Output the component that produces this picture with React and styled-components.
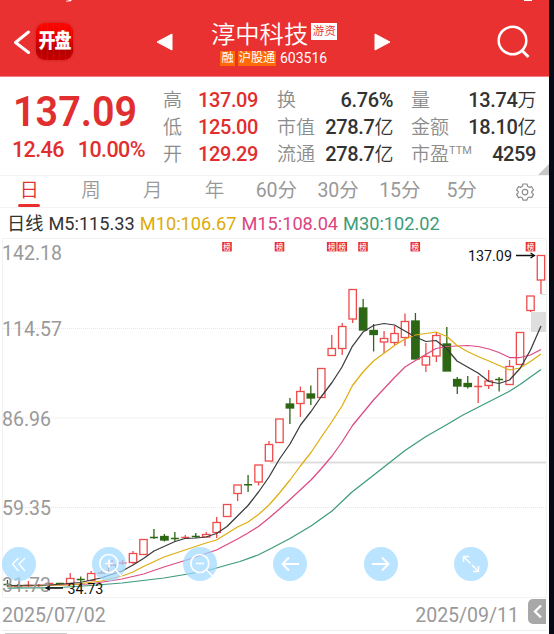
import React from 'react';
import styled, { createGlobalStyle } from 'styled-components';

const GlobalStyle = createGlobalStyle`
  * {
    box-sizing: border-box;
  }
  body {
    margin: 0;
    background: #060b13;
    font-family: Roboto, "Noto Sans CJK SC", sans-serif;
    overflow: hidden;
  }
`;

const RED = '#e93030';
const UP = '#ee4b4b';
const DOWN = '#2d6614';

const Screen = styled.main`
  width: 549px;
  height: 634px;
  background: #fff;
  overflow: hidden;
`;

const Header = styled.header`
  display: flex;
  position: relative;
  height: 77px;
  padding: 22px 19px 0 13px;
  background: #e93131;
  border-bottom: 1px solid #f38182;
  color: #fff;
`;

const StatusMarks = styled.svg`
  position: absolute;
  top: 0;
  left: 0;
`;

const BackIcon = styled.svg`
  flex: none;
  margin-top: 7px;
`;

const Logo = styled.div`
  flex: none;
  width: 37px;
  height: 37px;
  margin: 1px 0 0 6px;
  border-radius: 9px;
  background:
    repeating-linear-gradient(90deg, transparent 0 5px, rgba(255, 90, 70, 0.12) 5px 6px),
    linear-gradient(#ff0500, #e00000 45%, #b50000 75%, #c80000);
  box-shadow: 0 0 3px rgba(120, 0, 0, 0.35);
  font-size: 17px;
  font-weight: 900;
  line-height: 37px;
  letter-spacing: -1px;
  text-align: center;
  white-space: nowrap;

  span {
    display: block;
    transform: scaleY(1.2);
  }
`;

const PrevIcon = styled.svg`
  flex: none;
  margin: 10px 0 0 83px;
`;

const NextIcon = styled.svg`
  flex: none;
  margin: 10px 0 0 36px;
`;

const SearchIcon = styled.svg`
  flex: none;
  margin: 3px 0 0 auto;
`;

const Title = styled.div`
  flex: none;
  width: 127px;
  margin-left: 38px;
`;

const NameRow = styled.div`
  display: flex;
  height: 27px;
  align-items: flex-start;
`;

const Name = styled.h1`
  margin: 0;
  font-size: 24.3px;
  font-weight: 350;
  line-height: 26px;
  white-space: nowrap;
`;

const Flag = styled.span`
  flex: none;
  width: 26px;
  height: 17px;
  margin: 1px 0 0 3px;
  background: #fff;
  color: ${RED};
  font-size: 11.5px;
  font-weight: 350;
  line-height: 17px;
  text-align: center;
`;

const CodeRow = styled.div`
  display: flex;
  align-items: center;
  height: 18px;
  padding-left: 9px;
  font-size: 14px;
  line-height: 18px;
`;

const Tag = styled.span`
  height: 15px;
  width: ${(p) => p.$width}px;
  margin-right: ${(p) => p.$gap}px;
  background: #ff6a06;
  font-size: 12.2px;
  line-height: 15px;
  text-align: center;
  white-space: nowrap;
`;

const Quote = styled.section`
  display: flex;
  position: relative;
  height: 99px;
  padding-top: 10px;
  border-bottom: 1px solid #f3f3f3;
`;

const PriceBlock = styled.div`
  width: 163px;
  padding-left: 13px;
  color: #e12e2f;
  font-weight: 600;
`;

const Price = styled.div`
  padding-top: 1px;
  font-size: 42.5px;
  line-height: 48px;

  span {
    display: inline-block;
    transform: scaleX(0.93);
    transform-origin: 0 50%;
  }
`;

const Change = styled.div`
  display: flex;
  gap: 14px;
  margin-left: -1px;
  font-size: 21.5px;
  font-weight: 500;
  line-height: 27px;
  letter-spacing: -0.6px;
`;

const Stats = styled.dl`
  width: ${(p) => p.$width}px;
  margin: 0 ${(p) => p.$gap}px 0 0;
`;

const Stat = styled.div`
  display: flex;
  justify-content: space-between;
  height: 27px;
  font-size: 19px;
  line-height: 27px;
  white-space: nowrap;
`;

const Label = styled.dt`
  color: #8c8c8c;
  font-weight: 350;

  sup {
    position: relative;
    top: -7px;
    font-size: 11px;
    font-weight: 400;
    line-height: 0;
    vertical-align: baseline;
  }
`;

const Value = styled.dd`
  margin: 0;
  color: ${(p) => (p.$up ? '#e12e2f' : '#333')};
  font-size: 20px;
  font-weight: 500;
  letter-spacing: -0.4px;

  span {
    font-size: 19px;
    font-weight: 350;
  }
`;

const Corner = styled.svg`
  position: absolute;
  right: 0;
  bottom: 0;
`;

const Tabs = styled.nav`
  display: flex;
  height: 32px;
  margin-left: -1.5px;
  border-bottom: 1px solid #f3f3f3;
`;

const Tab = styled.div`
  display: flex;
  flex-direction: column;
  align-items: center;
  width: 61.75px;
  color: ${(p) => (p.$active ? RED : '#999')};
  font-size: 19.5px;
  font-weight: ${(p) => (p.$digits ? 400 : 350)};
  line-height: 30px;

  &::after {
    content: '';
    flex: none;
    width: 22px;
    height: 3px;
    margin-top: -2px;
    border-radius: 2px;
    background: ${(p) => (p.$active ? RED : 'transparent')};
  }
`;

const Gear = styled.svg`
  margin: 7px 0 0 23px;
`;

const Legend = styled.div`
  display: flex;
  gap: 5px;
  height: 30px;
  padding-left: 7px;
  font-size: 18.2px;
  line-height: 32px;
  white-space: nowrap;
`;

const Average = styled.span`
  color: ${(p) => p.$color};
`;

const ChartArea = styled.section`
  position: relative;
  height: 360px;

  > svg {
    display: block;
  }
`;

const Controls = styled.div`
  position: absolute;
  left: 2px;
  top: 309px;
  display: flex;
  gap: 56.4px;
`;

const RoundButton = styled.button`
  display: block;
  width: 34px;
  height: 34px;
  padding: 0;
  border: 0;
  border-radius: 50%;
  background: rgba(160, 218, 255, 0.72);

  svg {
    display: block;
  }
`;

const DateBar = styled.div`
  display: flex;
  justify-content: space-between;
  height: 33px;
  margin: 0 3px 0 2px;
  border-bottom: 1px solid #eee;
  color: #999;
  font-size: 19.5px;
  line-height: 36px;
`;

const EndDate = styled.div`
  display: flex;
  gap: 9px;
`;

const Handle = styled.div`
  width: 18px;
  height: 25px;
  margin-top: 1px;
  border-radius: 5px 0 0 5px;
  background: #a8a8a8;

  svg {
    display: block;
  }
`;

const BottomBar = styled.div`
  width: 62px;
  height: 2px;
  margin: 2px 0 0 5px;
  background: #c8c8c8;
`;

const stats = [
  {
    width: 95,
    gap: 19,
    rows: [
      { label: '高', value: '137.09', up: true },
      { label: '低', value: '125.00', up: true },
      { label: '开', value: '129.29', up: true },
    ],
  },
  {
    width: 116,
    gap: 18,
    rows: [
      { label: '换', value: '6.76%' },
      { label: '市值', value: '278.7', unit: '亿' },
      { label: '流通', value: '278.7', unit: '亿' },
    ],
  },
  {
    width: 125,
    gap: 0,
    rows: [
      { label: '量', value: '13.74', unit: '万' },
      { label: '金额', value: '18.10', unit: '亿' },
      { label: '市盈', sup: 'TTM', value: '4259' },
    ],
  },
];

const tabs = ['日', '周', '月', '年', '60分', '30分', '15分', '5分'];

const averages = [
  { text: 'M5:115.33', color: '#333' },
  { text: 'M10:106.67', color: '#dcab08' },
  { text: 'M15:108.04', color: '#dc4480' },
  { text: 'M30:102.02', color: '#3c9b79' },
];

// [up, body top, body bottom, wick top, wick bottom]
const candles = [
  [0, 584, 585, 580, 587], [0, 586, 587, 584, 588], [1, 585, 586, 581, 587], [1, 585, 586, 584, 587],
  [1, 583, 584, 583, 585], [0, 583, 584, 583, 584], [1, 578.5, 583.5, 573, 583], [0, 579, 580, 576.5, 582],
  [1, 573.5, 580.5, 571, 580], [1, 572.5, 573.5, 570, 574], [1, 565, 571.5, 560, 571], [1, 562.5, 563.5, 560, 565],
  [1, 553.5, 562.5, 551, 564], [1, 539.5, 554.5, 539, 554], [0, 537, 538, 529, 539], [0, 536.5, 540, 534, 541.5],
  [0, 538, 539, 532, 541], [1, 537, 538, 535, 539], [0, 536, 537, 533, 538], [1, 534.5, 537, 532, 537],
  [1, 522.5, 532.5, 517, 538], [1, 504.5, 516.5, 504, 516], [1, 485, 493.5, 485, 501], [0, 484, 485.5, 475, 492],
  [1, 465, 482, 465, 485.5], [1, 444.5, 461, 441, 461], [1, 419, 442.5, 419, 442], [0, 404, 408, 398, 424],
  [1, 391.5, 403.5, 386.5, 417], [0, 394, 398, 385.5, 405], [1, 368.5, 397.5, 368, 397], [1, 348.5, 355.5, 335, 355],
  [1, 326.5, 348.5, 323, 355], [1, 289.5, 319, 289, 323], [0, 308, 330, 299, 330], [0, 330.5, 334.5, 324, 351.5],
  [1, 338.5, 342, 331, 353], [1, 333.5, 342.5, 326, 345], [1, 321.5, 337.5, 313.5, 346], [0, 321, 359, 313, 359],
  [1, 356.5, 365, 343, 372], [1, 335.5, 356, 332, 362], [0, 344, 371, 327, 371], [0, 379.5, 386, 377, 394],
  [0, 383.5, 386.5, 376, 388.5], [1, 386, 387, 376, 403], [1, 381, 385.5, 370, 389], [0, 379, 380, 377, 391.5],
  [1, 366.5, 384.5, 360, 385], [1, 332.5, 364.5, 332, 365], [1, 296, 310.5, 296, 312], [1, 255.5, 280, 255, 294],
];

const lines = [
  {
    color: '#3d9b7a',
    points: '7.5,588 60,587.5 91,585.5 122,583 164,578 206,571 227,565 240,561.5 258,555 269,549.5 290,538.5 311,526 332,511 352,492 370,478 384,467 405,450.5 426,436.5 447,424.5 463,415 487,402.7 509,391.5 520,384.5 541,369.5',
  },
  {
    color: '#dc4a85',
    points: '7.5,586.5 90,584 122,579 143.5,574 164,567 185,560.5 206,553.5 216.5,550 227,544.5 237.5,539 248,533 258.5,526.5 269,518 279.5,509 290,499.5 311,480 321,469 332,456 342,442 352.5,425.5 373.5,400 394.5,377.5 405,367 415.5,360.5 436,348.5 447,346.5 467.5,345.5 478,346.5 489,349 499,352.5 509.5,357.5 520,357.5 530.5,355 541,349.5',
  },
  {
    color: '#dfad10',
    points: '7.5,586 70,585 101.5,581 122,576 133,572 143.5,566.5 164,557 185,550 206,543 216.5,540 227,533.5 237.5,527 248,522 258.5,514.5 269,505 279.5,493 290,480 300,466.5 311,452.5 321,437.5 332,421.5 342,406 352.5,385.5 363,372 373.5,361 394.5,345.5 405,339 415.5,335 426,333.5 436,332 447,336.5 457,345.5 467.5,351.5 478,356.5 489,361 509.5,370 520,368 530.5,361.5 541,354',
  },
  {
    color: '#3b3b3b',
    points: '7.5,585.5 50,585 80,582.5 101,578 122,571 133,565 143.5,558.5 154,551 164,546.5 175,541.5 185,538.5 196,538 206,537 216.5,533.5 227,526.5 237.5,516 248,505.5 258.5,492 269,477 279.5,459 290,444 300.5,425 311,411.5 321,397 332,382.5 342,367 352.5,346 363,332 373.5,325.5 384,323.5 394.5,325 405,331 415.5,337 426,341.5 436,340.5 447,349 457,361 467.5,367 478,373 489,381.5 499,383.5 509.5,380 520,368.5 530.5,350 541,326',
  },
];

const badges = [227, 279.5, 331.7, 342.2, 363, 415.3, 530.5];

const Candle = ({ index, data }) => {
  const [up, top, bottom, high, low] = data;
  const x = 7.5 + index * 10.46;
  const color = up ? UP : DOWN;
  if (bottom - top <= 1.5) {
    return (
      <g stroke={color} strokeWidth="1.3">
        <path d={`M${x} ${high}V${low}M${x - 4} ${(top + bottom) / 2}h8`} />
      </g>
    );
  }
  return (
    <g stroke={color} strokeWidth="1.3">
      <path d={`M${x} ${high}V${low}`} />
      <rect x={x - 3.7} y={top} width="7.4" height={bottom - top} fill={up ? '#fff' : color} />
    </g>
  );
};

const Chart = () => (
  <svg width="549" height="360" viewBox="0 238 549 360" fill="none">
    <path d="M2.5 238.5H546.5V597.5H2.5Z" stroke="#f2f2f2" />
    <path d="M3 328.5H546M3 418H546M3 507.5H546" stroke="#e6e6e6" strokeDasharray="1 1" />
    <path d="M270 462.5H546" stroke="#dedede" strokeWidth="2" />
    <path d="M541 294.5H546" stroke="#ddd" />
    <rect x="531" y="312" width="15" height="20" fill="#dedede" />
    {candles.map((data, i) => (
      <Candle key={i} index={i} data={data} />
    ))}
    {lines.map((line) => (
      <polyline key={line.color} points={line.points} stroke={line.color} strokeWidth="1.25" strokeLinejoin="round" />
    ))}
    {badges.map((x) => (
      <g key={x}>
        <rect x={x - 4.8} y="242" width="9.6" height="9.4" fill={RED} />
        <text x={x} y="249.5" fill="#fff" fontSize="7.5" fontWeight="500" textAnchor="middle">榜</text>
      </g>
    ))}
    <g fill="#999" fontSize="19.5">
      <text x="2" y="259.5">142.18</text>
      <text x="2" y="335.5">114.57</text>
      <text x="2" y="425.5">86.96</text>
      <text x="2" y="515">59.35</text>
      <text x="2" y="591.5">31.73</text>
    </g>
    <g fill="#111" fontSize="14.3">
      <text x="468" y="260.5">137.09</text>
      <text x="67.5" y="593.5">34.73</text>
    </g>
    <path d="M516 255.5H534M530.5 253L534.5 255.5L530.5 258M46 588H63M50 586L46 588L50 590" stroke="#111" strokeWidth="1.3" />
  </svg>
);

const icons = [
  <path key="first" d="M16.5 11L10.5 17L16.5 24M23 11L17 17L23 24" strokeWidth="1.4" />,
  <g key="in" strokeWidth="1.7">
    <circle cx="16.8" cy="16.5" r="9" />
    <path d="M13 16.5H21M17 12.5V20.5M23.5 23L30 29.5" />
  </g>,
  <g key="out" strokeWidth="1.7">
    <circle cx="16.8" cy="16.5" r="9" />
    <path d="M13 16.5H21M23.5 23L30 29.5" />
  </g>,
  <path key="left" d="M26 17H9.5M16 10.5L9.5 17L16 23.5" strokeWidth="2" />,
  <path key="right" d="M8 17H24.5M18 10.5L24.5 17L18 23.5" strokeWidth="2" />,
  <path key="expand" d="M9.500 15V9.500H15M9.500 9.500L16.500 16.500M18 18L24.500 24.500M24.500 19V24.500H19" strokeWidth="1.5" />,
];

const App = () => (
  <>
    <GlobalStyle />
    <Screen>
      <Header>
        <StatusMarks width="549" height="3" fill="#fff">
          <path d="M69 0H72Q71 2 66 1.5V.7Q68.500 1 69 0ZM524 0H532V1H524Z" />
        </StatusMarks>
        <BackIcon width="17" height="27" viewBox="0 0 17 27" fill="none">
          <path d="M15.500 3L2.500 13.500L15.500 23.500" stroke="#fff" strokeWidth="3" strokeLinecap="round" strokeLinejoin="round" />
        </BackIcon>
        <Logo>
          <span>开盘</span>
        </Logo>
        <PrevIcon width="17" height="20" viewBox="0 0 17 20">
          <path d="M1 10L16 2V18Z" fill="#fff" stroke="#fff" strokeLinejoin="round" />
        </PrevIcon>
        <Title>
          <NameRow>
            <Name>淳中科技</Name>
            <Flag>游资</Flag>
          </NameRow>
          <CodeRow>
            <Tag $width={15} $gap={3}>融</Tag>
            <Tag $width={38} $gap={4}>沪股通</Tag>
            603516
          </CodeRow>
        </Title>
        <NextIcon width="17" height="20" viewBox="0 0 17 20">
          <path d="M16 10L1 2V18Z" fill="#fff" stroke="#fff" strokeLinejoin="round" />
        </NextIcon>
        <SearchIcon width="34" height="34" viewBox="0 0 34 34" fill="none" stroke="#fff" strokeWidth="2.5">
          <circle cx="16.500" cy="15.500" r="13.800" />
          <path d="M26 25.500L32.500 32" strokeWidth="3" />
        </SearchIcon>
      </Header>
      <Quote>
        <PriceBlock>
          <Price>
            <span>137.09</span>
          </Price>
          <Change>
            <span>12.46</span>
            <span>10.00%</span>
          </Change>
        </PriceBlock>
        {stats.map((column) => (
          <Stats key={column.width} $width={column.width} $gap={column.gap}>
            {column.rows.map((row) => (
              <Stat key={row.label}>
                <Label>
                  {row.label}
                  {row.sup && <sup>{row.sup}</sup>}
                </Label>
                <Value $up={row.up}>
                  {row.value}
                  {row.unit && <span>{row.unit}</span>}
                </Value>
              </Stat>
            ))}
          </Stats>
        ))}
        <Corner width="11" height="11">
          <path d="M11 0V11H0Z" fill="#c6c6c6" />
        </Corner>
      </Quote>
      <Tabs>
        {tabs.map((tab, i) => (
          <Tab key={tab} $active={i === 0} $digits={i > 3}>{tab}</Tab>
        ))}
        <Gear width="18" height="18" viewBox="0 0 18 18" fill="none" stroke="#8c8c8c" strokeWidth="1.2" strokeLinejoin="round">
          <path d="M7 1H11L11.600 3.300L13.300 4.300L15.600 3.700L17.500 7L15.800 8.500V9.800L17.500 11.400L15.600 14.600L13.300 14L11.600 15L11 17.200H7L6.400 15L4.700 14L2.400 14.600L.6 11.400L2.200 9.800V8.500L.6 7L2.400 3.700L4.700 4.300L6.400 3.300Z" />
          <circle cx="9" cy="9.100" r="2.800" />
        </Gear>
      </Tabs>
      <Legend>
        <Average $color="#333">日线</Average>
        {averages.map((avg) => (
          <Average key={avg.text} $color={avg.color}>{avg.text}</Average>
        ))}
      </Legend>
      <ChartArea>
        <Chart />
        <Controls>
          {icons.map((icon) => (
            <RoundButton key={icon.key}>
              <svg width="34" height="34" fill="none" stroke="#fff">{icon}</svg>
            </RoundButton>
          ))}
        </Controls>
      </ChartArea>
      <DateBar>
        <span>2025/07/02</span>
        <EndDate>
          <span>2025/09/11</span>
          <Handle>
            <svg width="18" height="25" fill="none">
              <path d="M13 6.500L7 12.500L13 18.500" stroke="#fff" strokeWidth="2.300" />
            </svg>
          </Handle>
        </EndDate>
      </DateBar>
      <BottomBar />
    </Screen>
  </>
);

export default App;
